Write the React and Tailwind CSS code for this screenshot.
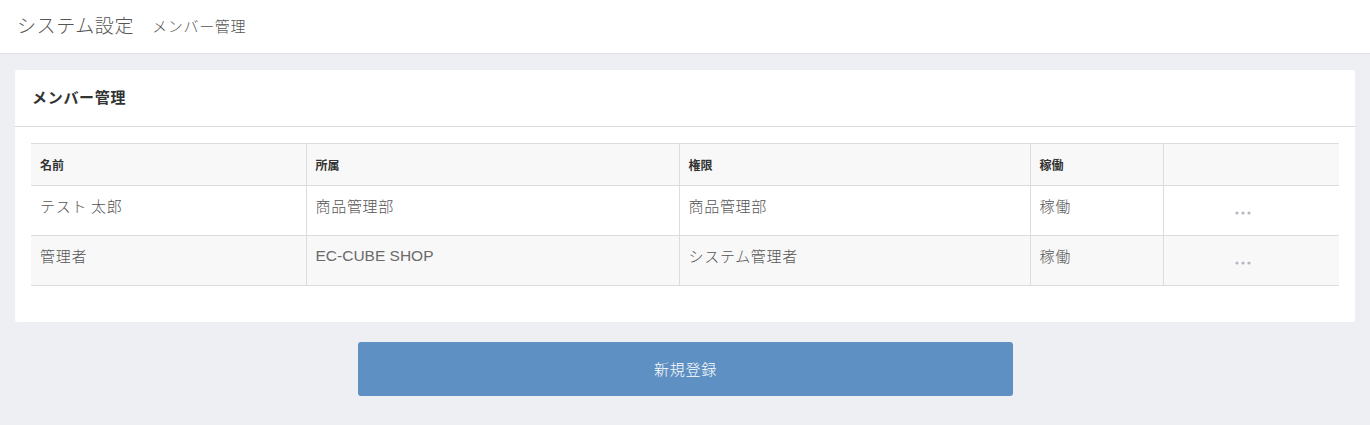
import React from "react";

const rows = [
  { name: "テスト 太郎", dept: "商品管理部", auth: "商品管理部", status: "稼働", bg: "bg-white" },
  { name: "管理者", dept: "EC-CUBE SHOP", auth: "システム管理者", status: "稼働", bg: "bg-[#f8f8f8]" },
];

function Dots() {
  return (
    <svg width="16" height="4" viewBox="0 0 16 4" className="block">
      <circle cx="2" cy="2" r="1.6" fill="#b4b8c0" />
      <circle cx="8" cy="2" r="1.6" fill="#b4b8c0" />
      <circle cx="14" cy="2" r="1.6" fill="#b4b8c0" />
    </svg>
  );
}

const cell = "align-top pt-[8px] pl-[9px] font-light leading-[24px] border-r border-[#dcdcdc]";
const td = `${cell} text-[15px] tracking-[0.7px] text-[#555]`;
const th = "pl-[9px] text-[12px] font-bold text-[#333] border-r border-[#dcdcdc]";

export default function App() {
  return (
    <div className="w-[1370px] h-[425px] bg-[#eeeff3] text-[#555] [font-family:'Noto_Sans_CJK_JP','Liberation_Sans',sans-serif]">
      <header className="h-[54px] bg-white border-b border-[#e0e2e6] flex items-center pl-[17px] pb-[2px]">
        <h1 className="text-[19px] tracking-[0.6px] font-light text-[#555]">システム設定</h1>
        <span className="ml-[18px] text-[15px] tracking-[0.7px] font-light text-[#555] mt-[2px]">メンバー管理</span>
      </header>
      <div className="px-[15px] pt-[16px]">
        <div className="bg-white rounded-[2px]">
          <div className="h-[57px] border-b border-[#d7dadd] flex items-center pl-[17px] pb-[1px]">
            <span className="text-[15px] tracking-[0.7px] font-bold text-[#333]">メンバー管理</span>
          </div>
          <div className="pt-[16px] pb-[36px] px-[16px]">
            <table className="w-full border-collapse text-left">
              <thead>
                <tr className="bg-[#f8f8f8] h-[42px] border-t border-b border-[#dcdcdc]">
                  <th className={`w-[275px] ${th}`}>名前</th>
                  <th className={`w-[373px] ${th}`}>所属</th>
                  <th className={`w-[351px] ${th}`}>権限</th>
                  <th className={`w-[133px] ${th}`}>稼働</th>
                  <th></th>
                </tr>
              </thead>
              <tbody>
                {rows.map((r, i) => (
                  <tr key={i} className={`${r.bg} h-[50px] border-b border-[#dcdcdc]`}>
                    <td className={td}>{r.name}</td>
                    {/^[\x00-\x7F]+$/.test(r.dept) ? (
                      <td className={`${cell} text-[15.5px] text-[#6a6a6a] [font-family:'Liberation_Sans',sans-serif]`}>{r.dept}</td>
                    ) : (
                      <td className={td}>{r.dept}</td>
                    )}
                    <td className={td}>{r.auth}</td>
                    <td className={td}>{r.status}</td>
                    <td className="align-top pt-[25px]">
                      <div className="flex justify-center pr-[16px]">
                        <Dots />
                      </div>
                    </td>
                  </tr>
                ))}
              </tbody>
            </table>
          </div>
        </div>
        <div className="flex justify-center pt-[20px]">
          <button className="w-[655px] h-[54px] bg-[#5e90c3] rounded-[3px] text-white text-[15px] tracking-[0.7px] font-light ml-[1px]">新規登録</button>
        </div>
      </div>
    </div>
  );
}
